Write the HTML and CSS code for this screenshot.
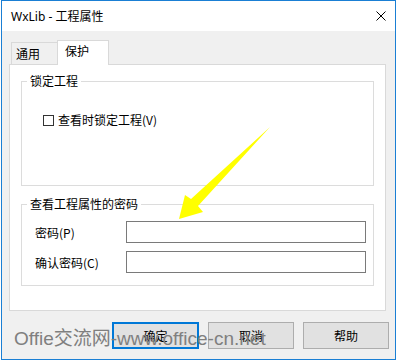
FILE: index.html
```html
<!DOCTYPE html>
<html lang="zh-CN">
<head>
  <meta charset="UTF-8">
  <title>WxLib - 工程属性</title>
  <link rel="stylesheet" href="styles.css">
</head>
<body>
  <div class="window">
    <div class="titlebar">
      <span class="title">WxLib - 工程属性</span>
      <svg class="close" width="10" height="10" viewBox="0 0 10 10">
        <path d="M0.5 0.5L9.5 9.5M9.5 0.5L0.5 9.5" stroke="#000" stroke-width="1" fill="none"/>
      </svg>
    </div>
    <div class="client">
      <div class="tabs">
        <div class="tab">通用</div>
        <div class="tab active">保护</div>
      </div>
      <div class="panel">
        <fieldset class="group">
          <legend>锁定工程</legend>
          <div class="group-body lock">
            <label class="check"><input type="checkbox"><span>查看时锁定工程(V)</span></label>
          </div>
        </fieldset>
        <fieldset class="group second">
          <legend>查看工程属性的密码</legend>
          <div class="group-body password">
            <div class="field"><label for="pw">密码(P)</label><input type="password" id="pw"></div>
            <div class="field"><label for="pw2">确认密码(C)</label><input type="password" id="pw2"></div>
          </div>
        </fieldset>
      </div>
      <div class="buttons">
        <button class="btn default">确定</button>
        <button class="btn">取消</button>
        <button class="btn">帮助</button>
      </div>
    </div>
  </div>

  <div class="watermark">Offie交流网-www.office-cn.net</div>

  <svg class="arrow" width="398" height="360" viewBox="0 0 398 360">
    <polygon points="270,127 191,199 185,195 179,219 203,212 198,206" fill="#ffff00"/>
  </svg>
</body>
</html>
```

FILE: styles.css
```css
body {
  margin: 0;
  background: #fff;
  font-family: "Noto Sans CJK SC", sans-serif;
  font-size: 12px;
  color: #000;
}
.window {
  margin-left: 1px;
  width: 393px;
  height: 358px;
  border: 1px solid #1a7fd4;
  display: flex;
  flex-direction: column;
}
.titlebar {
  height: 30px;
  background: #fff;
  display: flex;
  align-items: center;
  padding: 0 9px;
}
.title {
  font-family: "Noto Sans", "Noto Sans CJK SC", sans-serif;
  font-size: 12px;
}
.close {
  margin-left: auto;
}
.client {
  flex: 1;
  background: #f0f0f0;
  padding: 9px 6px 0 7px;
}
.tabs {
  display: flex;
  align-items: flex-end;
  margin-left: 2px;
}
.tab {
  box-sizing: border-box;
  width: 46px;
  height: 22px;
  border: 1px solid #d9d9d9;
  border-bottom: none;
  border-right: none;
  padding: 3px 0 0 4px;
  line-height: 16px;
}
.tab.active {
  width: 52px;
  height: 25px;
  border-right: 1px solid #d9d9d9;
  background: #fff;
  padding: 2px 0 0 7px;
  margin-bottom: -1px;
  position: relative;
  z-index: 1;
}
.panel {
  box-sizing: border-box;
  width: 377px;
  height: 247px;
  background: #fff;
  border: 1px solid #d9d9d9;
  padding: 8px 11px 0;
}
.group {
  margin: 0;
  padding: 0;
  min-width: 0;
  border: 1px solid #dcdcdc;
}
.group legend {
  margin-left: 5px;
  padding: 0 3px;
  line-height: 16px;
}
.group.second {
  margin-top: 10px;
}
.group-body.lock {
  height: 73px;
  padding: 23px 0 0 21px;
}
.check {
  display: flex;
  align-items: center;
  line-height: 16px;
}
.check input {
  appearance: none;
  width: 11px;
  height: 11px;
  margin: 0 4px 0 0;
  border: 1px solid #333;
  background: #fff;
}
.group-body.password {
  height: 64px;
  padding: 9px 0 0 13px;
  display: flex;
  flex-direction: column;
  gap: 8px;
}
.field {
  display: flex;
  align-items: center;
}
.field label {
  width: 91px;
}
.field input {
  box-sizing: border-box;
  width: 240px;
  height: 22px;
  margin: 0;
  padding: 0 3px;
  border: 1px solid #7a7a7a;
  background: #fff;
}
.buttons {
  margin-top: 11px;
  display: flex;
  justify-content: flex-end;
  gap: 9px;
}
.btn {
  box-sizing: border-box;
  width: 86px;
  height: 27px;
  padding: 0;
  border: 1px solid #adadad;
  background: #e1e1e1;
  font-family: "Noto Sans CJK SC", sans-serif;
  font-size: 12px;
  color: #000;
}
.btn.default {
  width: 87px;
  border: 2px solid #0078d7;
}
.watermark {
  position: absolute;
  left: 14px;
  top: 329px;
  font-family: "Liberation Sans", "Noto Sans CJK SC", sans-serif;
  font-size: 19px;
  line-height: 19px;
  color: #7f7f7f;
  white-space: nowrap;
  pointer-events: none;
}
.arrow {
  position: absolute;
  left: 0;
  top: 0;
  pointer-events: none;
}
```
